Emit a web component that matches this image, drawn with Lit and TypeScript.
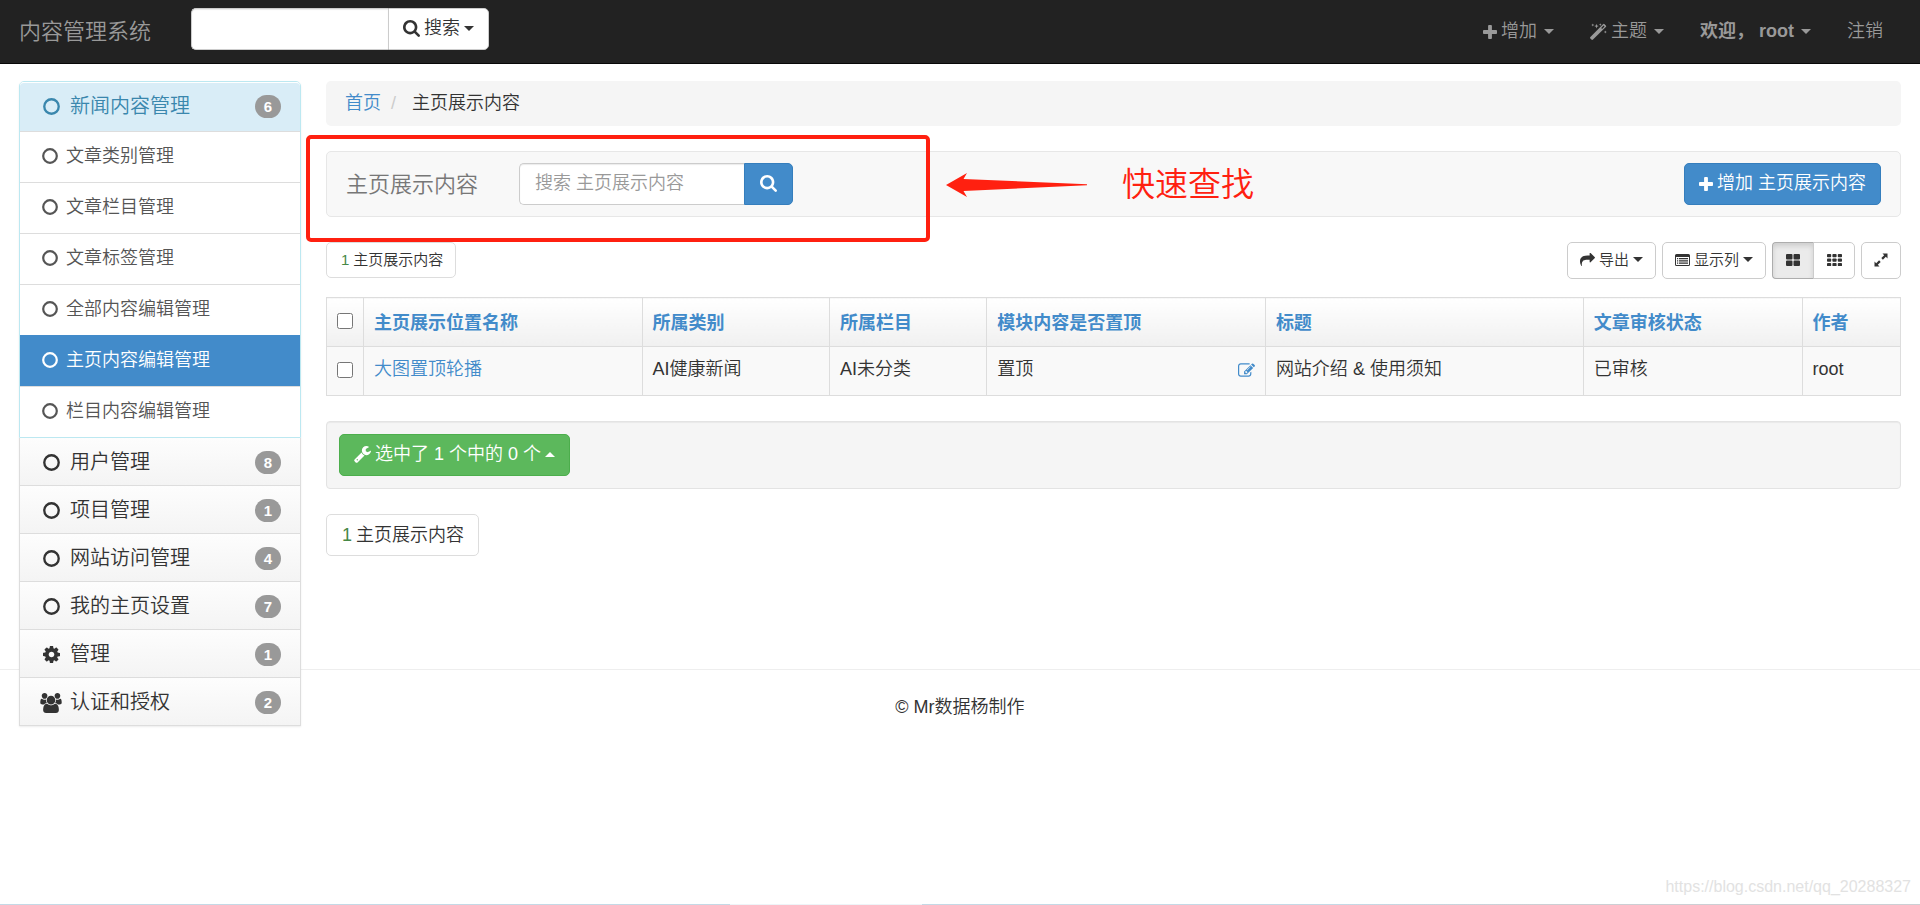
import { LitElement, html, svg, css, nothing, type TemplateResult } from "lit";
import { customElement, property, state } from "lit/decorators.js";
import { classMap } from "lit/directives/class-map.js";

interface Glyph {
  box: string;
  body: TemplateResult;
}

const GLYPHS: Record<string, Glyph> = {
  plus: {
    box: "192 128 1408 1408",
    body: svg`<path d="M1600 736v192q0 40-28 68t-68 28h-416v416q0 40-28 68t-68 28h-192q-40 0-68-28t-28-68v-416h-416q-40 0-68-28t-28-68v-192q0-40 28-68t68-28h416v-416q0-40 28-68t68-28h192q40 0 68 28t28 68v416h416q40 0 68 28t28 68z"/>`,
  },
  search: {
    box: "64 128 1664 1664",
    body: svg`<path d="M1216 832q0-185-131.5-316.5t-316.5-131.5-316.5 131.5-131.5 316.5 131.5 316.5 316.5 131.5 316.5-131.5 131.5-316.5zm512 832q0 52-38 90t-90 38q-54 0-90-38l-343-342q-179 124-399 124-143 0-273.5-55.5t-225-150-150-225-55.5-273.5 55.5-273.5 150-225 225-150 273.5-55.5 273.5 55.5 225 150 150 225 55.5 273.5q0 220-124 399l343 343q37 37 37 90z"/>`,
  },
  ring: {
    box: "0 0 16 16",
    body: svg`<circle cx="8" cy="8" r="6.8" fill="none" stroke="currentColor" stroke-width="2.2"/>`,
  },
  cog: {
    box: "128 128 1536 1536",
    body: svg`<path d="M1152 896q0-106-75-181t-181-75-181 75-75 181 75 181 181 75 181-75 75-181zm512-109v222q0 12-8 23t-20 13l-185 28q-19 54-39 91 35 50 107 138 10 12 10 25t-9 23q-27 37-99 108t-94 71q-12 0-26-9l-138-108q-44 23-91 38-16 136-29 186-7 28-36 28h-222q-14 0-24.5-8.5t-11.5-21.5l-28-184q-49-16-90-37l-141 107q-10 9-25 9-14 0-25-11-126-114-165-168-7-10-7-23 0-12 8-23 15-21 51-66.5t54-70.5q-27-50-41-99l-183-27q-13-2-21-12.5t-8-23.5v-222q0-12 8-23t19-13l186-28q14-46 39-92-40-57-107-138-10-12-10-24 0-10 9-23 26-36 98.5-107.5t94.5-71.5q13 0 26 10l138 107q44-23 91-38 16-136 29-186 7-28 36-28h222q14 0 24.5 8.5t11.5 21.5l28 184q49 16 90 37l142-107q9-9 24-9 13 0 25 10 129 119 165 170 7 8 7 22 0 12-8 23-15 21-51 66.5t-54 70.5q26 50 41 98l183 28q13 2 21 12.5t8 23.5z"/>`,
  },
  users: {
    box: "0 0 1920 1792",
    body: svg`<path d="M593 896q-162 5-265 128h-134q-82 0-138-40.5t-56-118.5q0-353 124-353 6 0 43.5 21t97.5 42.5 119 21.5q67 0 133-23-5 37-5 66 0 139 81 256zm1071 637q0 120-73 189.5t-194 69.5h-874q-121 0-194-69.5t-73-189.5q0-53 3.5-103.5t14-109 26.5-108.5 43-97.5 62-81 85.5-53.5 111.5-20q10 0 43 21.5t73 48 107 48 135 21.5 135-21.5 107-48 73-48 43-21.5q61 0 111.5 20t85.5 53.5 62 81 43 97.5 26.5 108.5 14 109 3.5 103.5zm-1024-1277q0 106-75 181t-181 75-181-75-75-181 75-181 181-75 181 75 75 181zm704 384q0 159-112.5 271.5t-271.5 112.5-271.5-112.5-112.5-271.5 112.5-271.5 271.5-112.5 271.5 112.5 112.5 271.5zm576 225q0 78-56 118.5t-138 40.5h-134q-103-123-265-128 81-117 81-256 0-29-5-66 66 23 133 23 59 0 119-21.5t97.5-42.5 43.5-21q124 0 124 353zm-128-609q0 106-75 181t-181 75-181-75-75-181 75-181 181-75 181 75 75 181z"/>`,
  },
  share: {
    box: "0 96 1792 1536",
    body: svg`<path d="M1792 640q0 26-19 45l-512 512q-19 19-45 19t-45-19-19-45v-256h-224q-98 0-175.5 6t-154 21.5-133 42.5-105.5 69.5-80 101-48.5 138.5-17.5 181q0 55 5 123 0 6 2.500 23.500t2.500 26.500q0 15-8.500 25t-23.500 10q-16 0-28-17-7-9-13-22t-13.500-30-10.500-24q-127-285-127-451 0-199 53-333 162-403 875-403h224v-256q0-26 19-45t45-19 45 19l512 512q19 19 19 45z"/>`,
  },
  list: {
    box: "0 0 15 12",
    body: svg`<path fill-rule="evenodd" d="M1.5 0h12A1.5 1.5 0 0 1 15 1.500v9a1.500 1.500 0 0 1-1.500 1.500h-12A1.500 1.500 0 0 1 0 10.500v-9A1.500 1.500 0 0 1 1.500 0zM1 3v7.400q0 .6.6.6h11.800q.6 0 .6-.6V3z"/><path d="M2 4h1.200v1.200H2zM4 4h9v1.200H4zM2 6.300h1.200v1.200H2zM4 6.300h9v1.200H4zM2 8.600h1.200v1.200H2zM4 8.600h9v1.200H4z"/>`,
  },
  large: {
    box: "0 0 14 12",
    body: svg`<path d="M1 0h4.500q1 0 1 1v3.500q0 1-1 1H1q-1 0-1-1V1q0-1 1-1zM8.500 0H13q1 0 1 1v3.500q0 1-1 1H8.500q-1 0-1-1V1q0-1 1-1zM1 6.500h4.500q1 0 1 1V11q0 1-1 1H1q-1 0-1-1V7.500q0-1 1-1zM8.500 6.500H13q1 0 1 1V11q0 1-1 1H8.500q-1 0-1-1V7.500q0-1 1-1z"/>`,
  },
  grid: {
    box: "0 0 15 12",
    body: svg`${[0, 5.4, 10.8].map((x) => [0, 4.5, 9].map((y) => svg`<rect x=${x} y=${y} width="4.200" height="3.200" rx=".8"/>`))}`,
  },
  resize: {
    box: "0 0 14 14",
    body: svg`<path d="M8.500 .5h5v5l-1.700-1.700-2.900 2.900-1.600-1.600 2.900-2.900zM5.500 13.500h-5v-5l1.700 1.700 2.900-2.900 1.600 1.600-2.900 2.900z"/>`,
  },
  wrench: {
    box: "64 128 1664 1664",
    body: svg`<path d="M448 1472q0-26-19-45t-45-19-45 19-19 45 19 45 45 19 45-19 19-45zm644-420l-682 682q-37 37-90 37-52 0-91-37l-106-108q-38-36-38-90 0-53 38-91l681-681q39 98 114.500 173.500t173.500 114.500zm634-435q0 39-23 106-47 134-164.500 217.500t-258.500 83.500q-185 0-316.500-131.500t-131.500-316.500 131.500-316.500 316.500-131.500q58 0 121.500 16.500t107.500 46.500q16 11 16 28t-16 28l-293 169v224l193 107q5-3 79-48.500t135.500-81 70.500-35.500q15 0 23.500 10t8.500 25z"/>`,
  },
  edit: {
    box: "0 128 1792 1408",
    body: svg`<path d="M888 1184l116-116-152-152-116 116v56h96v96h56zm440-720q-16-16-33 1l-350 350q-17 17-1 33t33-1l350-350q17-17 1-33zm80 594v190q0 119-84.500 203.500t-203.500 84.500h-832q-119 0-203.500-84.500t-84.500-203.500v-832q0-119 84.500-203.500t203.500-84.500h832q63 0 117 25 15 7 18 23 3 17-9 29l-49 49q-14 14-32 8-23-6-45-6h-832q-66 0-113 47t-47 113v832q0 66 47 113t113 47h832q66 0 113-47t47-113v-126q0-13 9-22l64-64q15-15 35-7t20 29zm-96-738l288 288-672 672h-288v-288zm444 132l-92 92-288-288 92-92q28-28 68-28t68 28l152 152q28 28 28 68t-28 68z"/>`,
  },
  magic: {
    box: "0 0 17 17",
    body: svg`<path fill-rule="evenodd" d="M.4 14 13 1.200q.8-.8 1.600 0l1.200 1.200q.8.8 0 1.600L3 16.600q-.8.8-1.600 0L.4 15.600q-.8-.8 0-1.600zM11.200 5l.9.9 2.400-2.400-.9-.9z"/><path d="M2.800.5l.4 1.100 1.100.4-1.100.4-.4 1.100-.4-1.100L1.300 2l1.100-.4zM6.500.8l.6 1.700 1.700.6-1.700.6-.6 1.700-.6-1.700-1.700-.6 1.700-.6zM10.300.2l.4 1 1 .4-1 .4-.4 1-.4-1-1-.4 1-.4zM15.300 7.500l.4 1.100 1.100.4-1.100.4-.4 1.100-.4-1.100-1.100-.4 1.100-.4z"/>`,
  },
  down: { box: "0 0 10 5", body: svg`<path d="M0 0h10L5 5z"/>` },
  up: { box: "0 0 10 5", body: svg`<path d="M0 5h10L5 0z"/>` },
};

const icon = (name: string, width: number, height = width) =>
  svg`<svg class="icon" viewBox=${GLYPHS[name].box} width=${width} height=${height} aria-hidden="true">${GLYPHS[name].body}</svg>`;

const shared = css`
  * {
    box-sizing: border-box;
  }
  a {
    color: #428bca;
    text-decoration: none;
  }
  button,
  input {
    font: inherit;
    margin: 0;
  }
  .icon {
    display: block;
    flex: none;
    fill: currentColor;
  }
`;

interface MenuGroup {
  label: string;
  icon: string;
  count: number;
  items?: string[];
}

const MENU: MenuGroup[] = [
  {
    label: "新闻内容管理",
    icon: "ring",
    count: 6,
    items: ["文章类别管理", "文章栏目管理", "文章标签管理", "全部内容编辑管理", "主页内容编辑管理", "栏目内容编辑管理"],
  },
  { label: "用户管理", icon: "ring", count: 8 },
  { label: "项目管理", icon: "ring", count: 1 },
  { label: "网站访问管理", icon: "ring", count: 4 },
  { label: "我的主页设置", icon: "ring", count: 7 },
  { label: "管理", icon: "cog", count: 1 },
  { label: "认证和授权", icon: "users", count: 2 },
];

@customElement("side-menu")
export class SideMenu extends LitElement {
  @property() current = "";

  static styles = [
    shared,
    css`
      :host {
        display: block;
        box-shadow: 0 1px 2px rgba(0, 0, 0, 0.08);
        border-radius: 5px 5px 0 0;
      }
      .group {
        border: 1px solid #ddd;
        border-top: 0;
      }
      .group.open {
        border: 1px solid #bce8f1;
        border-radius: 5px 5px 0 0;
      }
      .head {
        display: flex;
        align-items: center;
        height: 47px;
        padding: 2px 19px 0 18px;
        color: #333;
        font-size: 20px;
        background: linear-gradient(#fdfdfd, #f4f4f4);
      }
      .open .head {
        height: 49px;
        padding: 0 19px 2px 18px;
        color: #3a87ad;
        background: #d9edf7;
        border-top: 1px solid #fff;
        border-radius: 4px 4px 0 0;
      }
      .slot {
        display: flex;
        justify-content: center;
        width: 26px;
        margin-right: 6px;
      }
      .name {
        flex: 1;
      }
      .badge {
        display: flex;
        align-items: center;
        justify-content: center;
        min-width: 26px;
        height: 23px;
        border-radius: 12px;
        background: #999;
        color: #fff;
        font-size: 15px;
        font-weight: 700;
      }
      .item {
        display: flex;
        align-items: center;
        gap: 8px;
        height: 51px;
        padding: 0 22px 2px;
        border-top: 1px solid #ddd;
        color: #555;
      }
      .item.active {
        background: #428bca;
        border-color: #428bca;
        color: #fff;
      }
    `,
  ];

  render() {
    return html`<nav aria-label="管理">
      ${MENU.map(
        (group) => html`<section class=${classMap({ group: true, open: !!group.items })}>
          <a class="head" href="#">
            <span class="slot">${group.icon === "users" ? icon("users", 22, 20) : icon(group.icon, 17)}</span>
            <span class="name">${group.label}</span>
            <span class="badge">${group.count}</span>
          </a>
          ${group.items?.map(
            (item) => html`<a class=${classMap({ item: true, active: item === this.current })} href="#">${icon("ring", 16)}${item}</a>`
          ) ?? nothing}
        </section>`
      )}
    </nav>`;
  }
}

interface Column {
  title: string;
  value: string;
  span: string;
  link?: boolean;
  editable?: boolean;
}

const COLUMNS: Column[] = [
  { title: "主页展示位置名称", value: "大图置顶轮播", span: "wide", link: true },
  { title: "所属类别", value: "AI健康新闻", span: "kind" },
  { title: "所属栏目", value: "AI未分类", span: "section" },
  { title: "模块内容是否置顶", value: "置顶", span: "wide", editable: true },
  { title: "标题", value: "网站介绍 & 使用须知", span: "title" },
  { title: "文章审核状态", value: "已审核", span: "status" },
  { title: "作者", value: "root", span: "author" },
];

@customElement("record-table")
export class RecordTable extends LitElement {
  @state() private checked = false;

  static styles = [
    shared,
    css`
      :host {
        display: block;
      }
      .grid {
        width: 100%;
        table-layout: fixed;
        border-collapse: collapse;
        border: 1px solid #ddd;
      }
      .pick {
        width: 37px;
      }
      .wide {
        width: 17.7%;
      }
      .kind {
        width: 11.9%;
      }
      .section {
        width: 10%;
      }
      .title {
        width: 20.2%;
      }
      .status {
        width: 13.9%;
      }
      .cell {
        height: 49px;
        padding: 0 10px;
        border: 1px solid #ddd;
        text-align: left;
        font-weight: 350;
        background: #f9f9f9;
      }
      .cell.top {
        padding-top: 2px;
        background: linear-gradient(#fff, #f0f0f0);
        font-weight: 700;
      }
      .cell.box {
        padding: 0 0 2px 10px;
      }
      .check {
        display: block;
        width: 16px;
        height: 16px;
      }
      .value {
        display: flex;
        align-items: center;
        justify-content: space-between;
        padding-bottom: 3px;
      }
    `,
  ];

  render() {
    return html`<table class="grid">
      <colgroup>
        <col class="pick" />
        ${COLUMNS.map((c) => html`<col class=${c.span} />`)}
      </colgroup>
      <thead>
        <tr>
          <th class="cell top box">
            <input class="check" type="checkbox" aria-label="全选" .checked=${this.checked}
              @change=${(e: Event) => (this.checked = (e.target as HTMLInputElement).checked)} />
          </th>
          ${COLUMNS.map((c) => html`<th class="cell top"><a href="#">${c.title}</a></th>`)}
        </tr>
      </thead>
      <tbody>
        <tr>
          <td class="cell box">
            <input class="check" type="checkbox" aria-label="大图置顶轮播" .checked=${this.checked} />
          </td>
          ${COLUMNS.map(
            (c) => html`<td class="cell">
              <div class="value">
                ${c.link ? html`<a href="#">${c.value}</a>` : html`<span>${c.value}</span>`}
                ${c.editable ? html`<a href="#" aria-label="编辑">${icon("edit", 17, 14)}</a>` : nothing}
              </div>
            </td>`
          )}
        </tr>
      </tbody>
    </table>`;
  }
}

@customElement("app-root")
export class AppRoot extends LitElement {
  @state() private layout = "large";

  static styles = [
    shared,
    css`
      :host {
        display: flex;
        flex-direction: column;
        min-height: 100vh;
        position: relative;
        background: #fff;
        color: #333;
        font: 350 18px/25px "Liberation Sans", "Noto Sans CJK SC", sans-serif;
      }
      .bar {
        display: flex;
        align-items: center;
        height: 64px;
        padding: 0 19px;
        background: #222;
        border-bottom: 1px solid #080808;
      }
      .brand {
        color: #999;
        font-size: 22px;
        margin-right: 40px;
      }
      .search {
        display: flex;
        height: 42px;
      }
      .bar .search {
        margin-bottom: 5px;
      }
      .field {
        width: 197px;
        min-width: 0;
        padding: 0 15px 2px;
        border: 1px solid #ccc;
        border-right: 0;
        border-radius: 5px 0 0 5px;
        background: #fff;
        color: #555;
        box-shadow: inset 0 1px 1px rgba(0, 0, 0, 0.08);
      }
      .field.local {
        width: 225px;
      }
      .field::placeholder {
        color: #999;
        opacity: 1;
      }
      .btn {
        display: inline-flex;
        align-items: center;
        justify-content: center;
        gap: 4px;
        height: 42px;
        padding: 0 14px 1px;
        border: 1px solid #ccc;
        border-radius: 5px;
        background: #fff;
        color: #333;
        white-space: nowrap;
      }
      .btn.end {
        border-radius: 0 5px 5px 0;
      }
      .btn.primary {
        background: #428bca;
        border-color: #357ebd;
        color: #fff;
      }
      .btn.success {
        background: #5cb85c;
        border-color: #4cae4c;
        color: #fff;
      }
      .btn.find {
        width: 49px;
        padding: 0 0 2px;
      }
      .btn.small {
        height: 37px;
        padding: 0 12px 2px;
        gap: 4px;
        font-size: 15px;
      }
      .btn.toggle {
        width: 42px;
        padding: 0 0 2px;
      }
      .btn.first {
        width: 41px;
        border-radius: 4px 0 0 4px;
        border-right: 0;
      }
      .btn.on {
        background: #ebebeb;
        border-color: #adadad;
        box-shadow: inset 0 3px 5px rgba(0, 0, 0, 0.125), 1px 0 0 #adadad;
      }
      .btn.full {
        width: 40px;
        padding: 0 0 2px;
      }
      .links {
        display: flex;
        gap: 36px;
        margin-left: auto;
        padding-right: 18px;
      }
      .link {
        display: flex;
        align-items: center;
        gap: 4px;
        color: #999;
        white-space: nowrap;
      }
      .link .icon:last-child {
        margin-left: 3px;
      }
      .link.strong {
        font-weight: 700;
      }
      .body {
        display: flex;
        align-items: flex-start;
        gap: 25px;
        padding: 17px 19px 0;
      }
      .side {
        position: relative;
        z-index: 1;
        flex: none;
        width: 282px;
        margin-bottom: -80px;
      }
      .main {
        position: relative;
        flex: 1;
        min-width: 0;
        min-height: 588px;
      }
      .crumbs {
        display: flex;
        gap: 10px;
        height: 45px;
        padding: 10px 19px;
        border-radius: 5px;
        background: #f5f5f5;
      }
      .slash {
        color: #ccc;
        margin-right: 6px;
      }
      .panel {
        display: flex;
        align-items: center;
        height: 66px;
        margin-top: 25px;
        padding: 0 19px;
        border: 1px solid #e7e7e7;
        border-radius: 5px;
        background: #f8f8f8;
      }
      .title {
        margin: 0 41px 0 0;
        color: #777;
        font-size: 22px;
        font-weight: 350;
      }
      .push {
        margin-left: auto;
      }
      .tools {
        display: flex;
        gap: 6px;
        margin: 25px 0 18px;
      }
      .pair {
        display: flex;
      }
      .count {
        display: inline-flex;
        align-items: center;
        gap: 4px;
        height: 42px;
        padding: 0 14px 0 15px;
        border: 1px solid #ddd;
        border-radius: 5px;
      }
      .count.small {
        height: 36px;
        padding: 0 12px 2px 14px;
        margin-right: auto;
        font-size: 15px;
      }
      .number {
        color: #468847;
      }
      .well {
        height: 68px;
        margin: 25px 0;
        padding: 12px;
        border: 1px solid #e3e3e3;
        border-radius: 4px;
        background: #f5f5f5;
        box-shadow: inset 0 1px 1px rgba(0, 0, 0, 0.05);
      }
      .foot {
        padding: 25px 0;
        border-top: 1px solid #eee;
        text-align: center;
      }
      .frame {
        position: absolute;
        left: -20px;
        top: 54px;
        width: 624px;
        height: 107px;
        border: 4px solid #ff2010;
        border-radius: 5px;
        pointer-events: none;
      }
      .note {
        position: absolute;
        left: 620px;
        top: 84px;
        display: flex;
        align-items: center;
        gap: 35px;
        color: #ff2010;
        font-size: 33px;
        line-height: 40px;
        pointer-events: none;
      }
      .mark {
        position: absolute;
        right: 9px;
        bottom: 6px;
        color: #e2e2e2;
        font-size: 16px;
      }
      .edge {
        height: 1px;
        margin-top: auto;
        background: linear-gradient(90deg, #c4d9e6 38%, #eef4f8 38%, #eef4f8 48%, #c4d9e6 48%, #c4d9e6 70%, #cccfd4 80%);
      }
    `,
  ];

  private toggle(name: string, classes: string, label: string, width: number) {
    return html`<button
      class=${classMap({ btn: true, small: true, toggle: true, [classes]: true, on: this.layout === name })}
      type="button"
      aria-label=${label}
      @click=${() => (this.layout = name)}
    >
      ${icon(name, width, 12)}
    </button>`;
  }

  render() {
    return html`
      <header class="bar">
        <a class="brand" href="#">内容管理系统</a>
        <form class="search" @submit=${(e: Event) => e.preventDefault()}>
          <input class="field" type="text" aria-label="搜索" />
          <button class="btn end" type="button">${icon("search", 17)}搜索${icon("down", 10, 5)}</button>
        </form>
        <nav class="links">
          <a class="link" href="#">${icon("plus", 14)}<span>增加</span>${icon("down", 10, 5)}</a>
          <a class="link" href="#">${icon("magic", 17)}<span>主题</span>${icon("down", 10, 5)}</a>
          <a class="link strong" href="#"><span>欢迎， root</span>${icon("down", 10, 5)}</a>
          <a class="link" href="#">注销</a>
        </nav>
      </header>
      <div class="body">
        <side-menu class="side" current="主页内容编辑管理"></side-menu>
        <main class="main">
          <nav class="crumbs">
            <a href="#">首页</a><span class="slash">/</span><span>主页展示内容</span>
          </nav>
          <section class="panel">
            <h1 class="title">主页展示内容</h1>
            <form class="search" @submit=${(e: Event) => e.preventDefault()}>
              <input class="field local" type="text" aria-label="搜索 主页展示内容" placeholder="搜索 主页展示内容" />
              <button class="btn primary end find" type="submit" aria-label="搜索">${icon("search", 17)}</button>
            </form>
            <button class="btn primary push" type="button">${icon("plus", 14)}增加 主页展示内容</button>
          </section>
          <div class="tools">
            <span class="count small"><span class="number">1</span>主页展示内容</span>
            <button class="btn small" type="button">${icon("share", 15, 13)}导出${icon("down", 10, 5)}</button>
            <button class="btn small" type="button">${icon("list", 15, 12)}显示列${icon("down", 10, 5)}</button>
            <span class="pair">${this.toggle("large", "first", "大图标", 14)}${this.toggle("grid", "end", "小图标", 15)}</span>
            <button class="btn small full" type="button" aria-label="全屏">${icon("resize", 14)}</button>
          </div>
          <record-table></record-table>
          <div class="well">
            <button class="btn success" type="button">${icon("wrench", 17)}选中了 1 个中的 0 个${icon("up", 10, 5)}</button>
          </div>
          <span class="count"><span class="number">1</span>主页展示内容</span>
          <div class="frame"></div>
          <div class="note">
            <svg width="141" height="24" viewBox="0 0 141 24" aria-hidden="true">
              <path fill="currentColor" d="M0 12 21 0 17.500 6 141 11.300v1L17.500 18 21 24z" />
            </svg>
            <span>快速查找</span>
          </div>
        </main>
      </div>
      <footer class="foot">© Mr数据杨制作</footer>
      <div class="edge"></div>
      <span class="mark">https://blog.csdn.net/qq_20288327</span>
    `;
  }
}
